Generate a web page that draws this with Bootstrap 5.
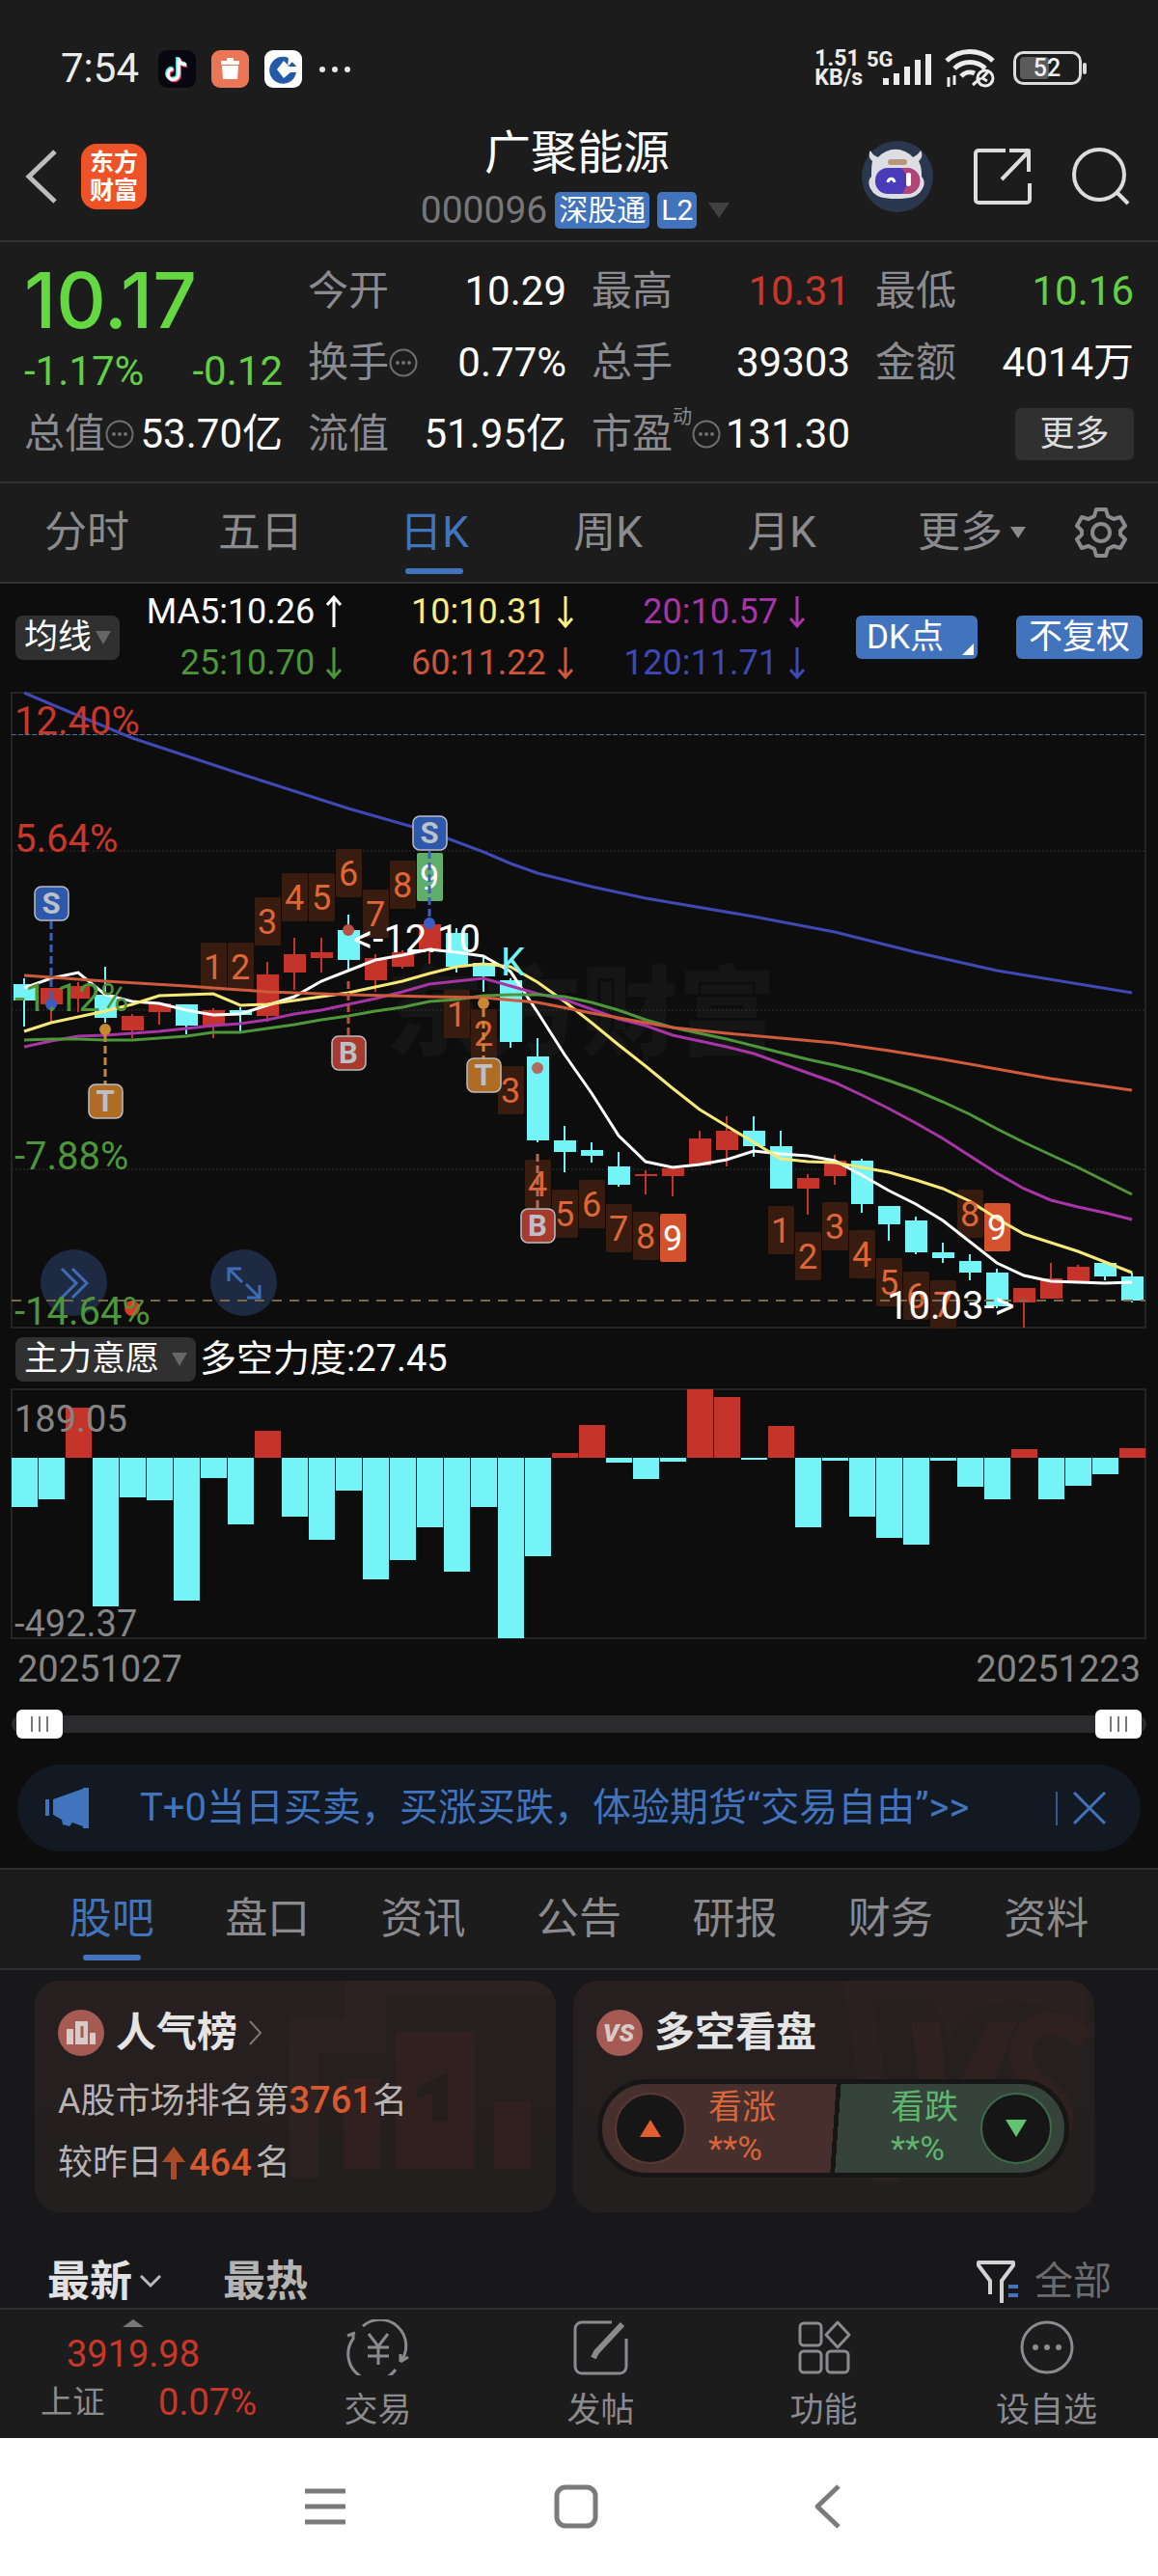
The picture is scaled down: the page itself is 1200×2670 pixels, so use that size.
<!DOCTYPE html>
<html lang="zh-CN">
<head>
<meta charset="utf-8">
<meta name="viewport" content="width=device-width, initial-scale=1">
<title>广聚能源 000096</title>
<link href="https://cdn.jsdelivr.net/npm/bootstrap@5.3.0/dist/css/bootstrap.min.css" rel="stylesheet">
<style>
:root{--up:#c9372b;--down:#62cf46;--mute:#8b8b8f;--blue:#4273bd;--panel:#1c1c1c;--pit:#0d0d0d;--rule:#303032}
body{font-family:Roboto,"Noto Sans CJK SC",sans-serif;font-size:36px;line-height:1.2;background:#fff;color:#fff}
button,select,input{font:inherit;color:inherit}
button{background:none;border:0;padding:0}
a{color:inherit;text-decoration:none}
svg{display:block;flex:none}
.panel{background:var(--panel)}
.pit{background:var(--pit)}
main.pit{padding-bottom:17px}
.rule-b{border-bottom:2px solid var(--rule)}
.rule-t{border-top:2px solid var(--rule)}
.t-mute{color:var(--mute)}.t-up{color:var(--up)}.t-down{color:var(--down)}
.status{height:116px;padding:46px 72px 0 63px;font-size:42px;color:#ececec}
.app-ico{width:39px;height:39px}
.rate{font-size:23px;line-height:20px;font-weight:700}
.topbar{height:135px;padding:0 28px 0 24px}
.side{width:300px;height:68px;margin-top:33px}
.stock-head{padding-top:10px}
.stock-name{font-size:48px;line-height:66px;margin:0;font-weight:400}
.code{font-size:39px;line-height:52px;color:#77777a}
.chip{font-size:30px;line-height:38px;background:var(--blue);border-radius:5px;padding:0 4px}
.logo{width:68px;height:68px;border-radius:16px;background:#ee5327;font-size:25px;line-height:29px;font-weight:700}
.quote{--bs-gutter-x:26px;margin:0;padding:14px 12px 12px}
.cell{height:74px;font-size:42px;white-space:nowrap}
.cell dt{font-weight:400;color:var(--mute)}
.cell dt sup{font-size:20px;top:-18px}
.cell dd{margin:0}
.price{font-family:Inter,Roboto,sans-serif;font-size:80px;line-height:92px;font-weight:500;color:#64d840}
.delta{font-size:42px;line-height:56px}
.more{font-size:36px;line-height:54px;width:123px;border-radius:6px;background:#303030;color:#ddd}
.tabs{height:102px}
.tabs a{font-size:44px;color:var(--mute);position:relative}
.tabs a.on{color:var(--blue)}
.tabs a.on::after{content:"";position:absolute;left:50%;bottom:8px;width:60px;height:6px;border-radius:3px;background:var(--blue);transform:translateX(-50%)}
.forum-tabs{height:106px;padding:0 35px}
.w-tab{width:15%}
.legend-bar{height:111px;padding:0 16px}
.pick{position:relative}
.pick select{appearance:none;border:0;border-radius:8px;background:#303030;height:46px;line-height:46px;padding:0 9px;font-size:35px}
.pick svg{position:absolute;right:9px;top:16px;pointer-events:none}
.ma{display:grid;grid-template-columns:231fr 239fr 240fr;font-size:36px;line-height:53px}
.ma span{display:flex;justify-content:flex-end;align-items:center;gap:11px}
.tag-btn{background:var(--blue);border-radius:6px;height:45px;line-height:45px;font-size:35px;padding:0 13px}
.tag-dk{width:126px;margin:0 40px 0 52px;padding:0 11px}
.chart{position:relative}
.chart svg.plot{width:100%;height:auto;position:relative;pointer-events:none}
.float-btn{position:absolute;top:87.5%;width:69px;height:69px;border-radius:50%;background:#1d2a42;display:flex;align-items:center;justify-content:center}
.fb-a{left:3.5%}.fb-b{left:18.2%}
.dates{height:64px;padding:0 18px;font-size:38px;color:#858585}
.zoomer{position:relative;height:48px;margin:0 12px}
.zoomer::before{content:"";position:absolute;left:0;right:0;top:15px;height:18px;border-radius:9px;background:#2b2b2d}
.zoomer input{position:absolute;left:5px;right:5px;width:calc(100% - 10px);height:48px;margin:0;appearance:none;background:none;pointer-events:none}
.zoomer input::-webkit-slider-thumb{appearance:none;pointer-events:auto;width:48px;height:30px;border-radius:6px;background:linear-gradient(90deg,#777 2px,#fff 2px 8px,#777 8px 10px,#fff 10px 16px,#777 16px 18px) 15px 7px/18px 16px no-repeat #fff}
.promo{margin:18px 18px 0;height:90px;border-radius:45px;background:#121922;color:#4273bd;font-size:40px;padding:0 36px 0 29px}
.promo i{width:2px;height:35px;background:#35598c}
.feed{background:#18181a}
.tile{position:relative;overflow:hidden;flex:1;height:240px;border-radius:26px;background:linear-gradient(#281f20,#221f1e);padding:24px}
.tile>svg.ghost{position:absolute;right:0;top:0}
.tile h2{font-size:42px;line-height:60px;gap:12px;margin:0;font-weight:700;color:#e4e4e4}
.tile p{font-size:36px;line-height:64px;margin:0;color:#b9b4b3}
.tile h2,.tile p{position:relative}
.tile b{color:#d9592f;font-weight:500;font-size:38px}
.vote{position:relative;height:102px;border-radius:51px;border:5px solid #171616;overflow:hidden;margin:18px 2px 0 1px;background:linear-gradient(94deg,#472f2e 50%,#171616 50% 51%,#35433a 51%)}
.vote button{width:50%;padding:0 13px;gap:23px;font-size:35px;line-height:43px;text-align:left}
.disc{width:74px;height:74px;border-radius:50%;background:#171616;border:2px solid #5a3833;display:flex;align-items:center;justify-content:center}
.sort{height:99px;padding:45px 48px 0 49px;font-size:44px;line-height:56px}
.sort a{font-weight:700}
.sort button{font-size:40px;color:#6c6c6e}
.bottom{height:135px}
.bottom a{flex:1;font-size:35px;color:var(--mute);padding-top:10px}
.bottom .index{flex:0 0 23%;color:var(--up)}
.index-val{font-size:38px;line-height:56px}
.index-row{font-size:38px;line-height:44px;padding:0 10px 0 42px}
.sysnav{height:143px;background:#fff;padding-right:6px}
.sysnav button{width:260px;height:142px;display:flex;align-items:center;justify-content:center}
</style>
</head>
<body>
<div class="panel">
  <div class="status d-flex align-items-start justify-content-between">
    <div class="d-flex align-items-center gap-3">
      <span class="me-1">7:54</span>
      <svg class="app-ico" viewBox="0 0 39 39"><rect width="39" height="39" rx="9" fill="#070710"/><g fill="none" stroke-width="4"><path d="M21 8v17a5.500 5.500 0 1 1-5.500-5.500M21 9c1 4 4 6 8 6" stroke="#35e5e0" transform="translate(-1 -1)"/><path d="M21 8v17a5.500 5.500 0 1 1-5.500-5.500M21 9c1 4 4 6 8 6" stroke="#f0325a" transform="translate(1 1)"/><path d="M21 8v17a5.500 5.500 0 1 1-5.500-5.500M21 9c1 4 4 6 8 6" stroke="#fff" stroke-width="3.500"/></g></svg>
      <svg class="app-ico" viewBox="0 0 39 39"><rect width="39" height="39" rx="9" fill="#ea7657"/><path d="M16 8h7v3h6v4H10v-4h6zM11 16h17l-1 14H12z" fill="#fff"/></svg>
      <svg class="app-ico" viewBox="0 0 39 39"><rect width="39" height="39" rx="9" fill="#fff"/><path d="M25 8A14 14 0 1 0 33 23h-6l-7 6-7-9 7-9 6 6h7A14 14 0 0 0 30 11l-6 6z" fill="#2459a8"/><path d="M23 5l11 11" stroke="#fff" stroke-width="2"/></svg>
      <svg width="36" height="39" viewBox="0 0 36 39" fill="#e8e8e8"><circle cx="5" cy="20" r="3"/><circle cx="18" cy="20" r="3"/><circle cx="31" cy="20" r="3"/></svg>
    </div>
    <div class="d-flex align-items-center pt-1">
      <span class="rate">1.51<br>KB/s</span>
      <svg width="72" height="40" viewBox="0 0 72 40" fill="#ececec" class="ms-1"><text x="0" y="18" font-size="22" font-weight="700">5G</text><path d="M17 30h6v7h-6zM28 25h6v12h-6zM39 18h6v19h-6zM50 11h6v26h-6zM61 5h6v32h-6z"/></svg>
      <svg width="56" height="42" viewBox="0 0 56 42" fill="none" stroke="#ececec" stroke-width="5" class="ms-2"><path d="M3 13a35 35 0 0 1 48 0M11 21a23 23 0 0 1 32 0M18 29a12 12 0 0 1 14-3"/><circle cx="43" cy="31" r="8" stroke-width="3"/><path d="M46 24l-6 7 5 3M30 38l8-7" stroke-width="3"/><path d="M5 30v10M11 28v10" stroke-width="3"/></svg>
      <svg width="78" height="36" viewBox="0 0 78 36" class="ms-3"><rect x="1.500" y="1.500" width="68" height="32" rx="9" fill="none" stroke="#dcdcdc" stroke-width="3"/><rect x="7" y="6" width="30" height="23" rx="4" fill="#5b5b5b"/><rect x="72" y="12" width="4" height="12" rx="2" fill="#dcdcdc"/><text x="35" y="26" font-size="25" font-weight="500" fill="#f0f0f0" text-anchor="middle">52</text></svg>
    </div>
  </div>

  <header class="topbar d-flex align-items-start justify-content-between rule-b">
    <div class="side d-flex align-items-center gap-4">
      <button aria-label="返回"><svg width="36" height="60" viewBox="0 0 36 60" fill="none" stroke="#bdbdbd" stroke-width="5"><path d="M33 4L6 30l27 26"/></svg></button>
      <a href="#" class="logo d-flex align-items-center justify-content-center text-center">东方<br>财富</a>
    </div>
    <div class="text-center stock-head">
      <h1 class="stock-name">广聚能源</h1>
      <div class="d-flex align-items-center justify-content-center gap-2 code"><span>000096</span><span class="chip text-white">深股通</span><span class="chip text-white">L2</span><svg width="30" height="16" viewBox="0 0 30 16"><path d="M4 0h22L15 16z" fill="#414141"/></svg></div>
    </div>
    <div class="side d-flex align-items-center justify-content-end gap-4">
      <a href="#" aria-label="助手"><svg width="76" height="76" viewBox="0 0 76 76"><circle cx="38" cy="38" r="37" fill="#2b374e"/><path d="M12 22c-4-3-4-8-2-11 2 4 5 6 8 7a24 24 0 0 1 36 0c4-2 6-4 8-7 2 3 2 8-2 11 4 8 3 16 3 16 4 4 3 10 0 14-4 7-12 9-26 9s-22-2-26-9c-3-4-4-10 0-14 0-6 0-11 1-16z" fill="#dddde4"/><rect x="15" y="29" width="46" height="27" rx="13" fill="#4a3bb8"/><path d="M42 29h6a13 13 0 0 1 0 27h-6c8-8 8-19 0-27z" fill="#b04678"/><rect x="28" y="20" width="20" height="6" rx="3" fill="#b6977c"/><path d="M28 44c1-5 6-5 7 0" fill="none" stroke="#fff" stroke-width="3"/><rect x="47" y="34" width="5" height="14" rx="2" fill="#fff"/></svg></a>
      <a href="#" aria-label="分享" class="ms-3"><svg width="62" height="62" viewBox="0 0 62 62" fill="none" stroke="#dcdcdc" stroke-width="4" stroke-linejoin="round"><path d="M34 4H6a3 3 0 0 0-3 3v48a3 3 0 0 0 3 3h50a3 3 0 0 0 3-3V38M38 4h20v22M58 5L30 34"/></svg></a>
      <a href="#" aria-label="搜索" class="ms-3"><svg width="62" height="62" viewBox="0 0 62 62" fill="none" stroke="#dcdcdc" stroke-width="4"><circle cx="29" cy="29" r="26"/><path d="M48 48l11 11"/></svg></a>
    </div>
  </header>

  <dl class="row quote rule-b">
    <div class="col-3">
      <div class="price">10.17</div>
      <div class="delta d-flex justify-content-between t-down"><span>-1.17%</span><span>-0.12</span></div>
      <div class="cell d-flex align-items-center justify-content-between"><dt class="d-flex align-items-center">总值<svg width="30" height="30" viewBox="0 0 30 30"><use href="#dots"/></svg></dt><dd>53.70亿</dd></div>
    </div>
    <div class="col-3">
      <div class="cell d-flex align-items-center justify-content-between"><dt>今开</dt><dd>10.29</dd></div>
      <div class="cell d-flex align-items-center justify-content-between"><dt class="d-flex align-items-center">换手<svg width="30" height="30" viewBox="0 0 30 30"><use href="#dots"/></svg></dt><dd>0.77%</dd></div>
      <div class="cell d-flex align-items-center justify-content-between"><dt>流值</dt><dd>51.95亿</dd></div>
    </div>
    <div class="col-3">
      <div class="cell d-flex align-items-center justify-content-between"><dt>最高</dt><dd class="t-up">10.31</dd></div>
      <div class="cell d-flex align-items-center justify-content-between"><dt>总手</dt><dd>39303</dd></div>
      <div class="cell d-flex align-items-center justify-content-between"><dt class="d-flex align-items-center">市盈<sup>动</sup><svg width="30" height="30" viewBox="0 0 30 30"><use href="#dots"/></svg></dt><dd>131.30</dd></div>
    </div>
    <div class="col-3">
      <div class="cell d-flex align-items-center justify-content-between"><dt>最低</dt><dd class="t-down">10.16</dd></div>
      <div class="cell d-flex align-items-center justify-content-between"><dt>金额</dt><dd>4014万</dd></div>
      <div class="cell d-flex align-items-center justify-content-end"><button class="more">更多</button></div>
    </div>
  </dl>

  <nav class="tabs d-flex">
    <a href="#" class="w-tab d-flex align-items-center justify-content-center">分时</a>
    <a href="#" class="w-tab d-flex align-items-center justify-content-center">五日</a>
    <a href="#" class="w-tab d-flex align-items-center justify-content-center on">日K</a>
    <a href="#" class="w-tab d-flex align-items-center justify-content-center">周K</a>
    <a href="#" class="w-tab d-flex align-items-center justify-content-center">月K</a>
    <a href="#" class="flex-fill d-flex align-items-center justify-content-center gap-2">更多<svg width="16" height="12" viewBox="0 0 16 12"><path d="M0 0h16L8 12z" fill="#8b8b8f"/></svg></a>
    <a href="#" aria-label="设置" class="d-flex align-items-center pe-4 me-2"><svg width="54" height="54" viewBox="0 0 54 54" fill="none" stroke="#8b8b8f" stroke-width="4" stroke-linejoin="round"><path d="M22 3h10l2 7 6 3 7-2 5 9-5 5v4l5 5-5 9-7-2-6 3-2 7H22l-2-7-6-3-7 2-5-9 5-5v-4l-5-5 5-9 7 2 6-3z"/><circle cx="27" cy="27" r="9"/></svg></a>
  </nav>
</div>

<main class="pit rule-t">
  <div class="legend-bar d-flex align-items-center">
    <label class="pick"><select aria-label="指标" style="width:108px"><option>均线</option></select><svg width="16" height="14" viewBox="0 0 16 14"><path d="M0 0h16L8 14z" fill="#666"/></svg></label>
    <div class="ma flex-fill" id="ma"></div>
    <button class="tag-btn tag-dk text-start position-relative">DK点<svg class="position-absolute end-0 bottom-0 me-1 mb-1" width="12" height="12" viewBox="0 0 12 12"><path d="M12 0v12H0z" fill="#fff"/></svg></button>
    <button class="tag-btn">不复权</button>
  </div>

  <div class="chart">
    <button class="float-btn fb-a" aria-label="展开"><svg width="34" height="34" viewBox="0 0 34 34" fill="none" stroke="#3f6db5" stroke-width="3"><path d="M4 2l15 15L4 32M15 2l15 15-15 15"/></svg></button>
    <button class="float-btn fb-b" aria-label="全屏"><svg width="38" height="38" viewBox="0 0 38 38" fill="none" stroke="#3f6db5" stroke-width="3"><path d="M3 17V4h13M4 5l13 13M35 21v13H22M34 33L21 20"/></svg></button>
    <svg class="plot" id="kline" viewBox="0 716 1200 662" role="img" aria-label="日K线图"></svg>
  </div>

  <div class="d-flex align-items-center px-3" style="height:61px">
    <label class="pick"><select aria-label="副图指标" style="width:187px"><option>主力意愿</option></select><svg width="16" height="14" viewBox="0 0 16 14"><path d="M0 0h16L8 14z" fill="#666"/></svg></label>
    <span class="ms-1" style="font-size:38px">多空力度:27.45</span>
  </div>
  <div class="chart"><svg class="plot" id="force" viewBox="0 1439 1200 260" role="img" aria-label="多空力度"></svg></div>
  <div class="dates d-flex align-items-center justify-content-between"><span>20251027</span><span>20251223</span></div>
  <div class="zoomer"><input type="range" value="0" aria-label="起始"><input type="range" value="100" aria-label="结束"></div>

  <div class="promo d-flex align-items-center">
    <svg width="50" height="42" viewBox="0 0 50 42" fill="#4273bd"><path d="M0 12h4v17H0zM8 12L39 1V0h6v42h-6v-2l-11-4-3 4-7-2-1-5-9-5z"/></svg>
    <a href="#" class="flex-fill ps-5">T+0当日买卖，买涨买跌，体验期货“交易自由”&gt;&gt;</a>
    <i></i>
    <button aria-label="关闭" class="ps-3"><svg width="34" height="34" viewBox="0 0 34 34" stroke="#4273bd" stroke-width="3"><path d="M1 1l32 32M33 1L1 33"/></svg></button>
  </div>
</main>

<section class="feed">
  <nav class="tabs forum-tabs panel rule-t rule-b d-flex">
    <a href="#" class="col d-flex align-items-center justify-content-center on">股吧</a>
    <a href="#" class="col d-flex align-items-center justify-content-center">盘口</a>
    <a href="#" class="col d-flex align-items-center justify-content-center">资讯</a>
    <a href="#" class="col d-flex align-items-center justify-content-center">公告</a>
    <a href="#" class="col d-flex align-items-center justify-content-center">研报</a>
    <a href="#" class="col d-flex align-items-center justify-content-center">财务</a>
    <a href="#" class="col d-flex align-items-center justify-content-center">资料</a>
  </nav>
  <div class="d-flex" style="gap:18px;padding:11px 66px 0 36px">
    <article class="tile">
      <svg class="ghost" width="280" height="240" viewBox="0 0 280 240"><path d="M62 0h218v14H104v60H34v130H4V40h58z" fill="#2b2221"/><path d="M114 53h82v142h-82zM60 101h38v94H60zM216 125h38v70h-38z" fill="#302120"/><path d="M136 110l32-14v50h-16v-30l-16 6z" fill="#251e1e"/></svg>
      <h2 class="d-flex align-items-center"><svg width="48" height="48" viewBox="0 0 48 48"><circle cx="24" cy="24" r="24" fill="#a55a54"/><path d="M9 20h7v16H9zM18 12h13v24H18zM33 24h6v12h-6z" fill="#d9c9c7"/><path d="M25 17v12" stroke="#a55a54" stroke-width="3"/></svg><span>人气榜</span><svg width="14" height="26" viewBox="0 0 14 26" fill="none" stroke="#777" stroke-width="2"><path d="M1 1l11 12L1 25"/></svg></h2>
      <p class="mt-2">A股市场排名第<b>3761</b>名</p>
      <p class="d-flex align-items-center">较昨日<svg width="24" height="34" viewBox="0 0 24 34"><path d="M12 0l12 16h-9v18H9V16H0z" fill="#a84a26"/></svg><b class="mx-1">464</b>名</p>
    </article>
    <article class="tile">
      <svg class="ghost" width="270" height="240" viewBox="0 0 270 240"><path d="M10 0h250v50c-40-40-120-40-140 10l-20-42H40l30 190H40z" fill="#2a2120"/><path d="M80 42h30l8 90 42-90h30L130 195h-30z" fill="#2f2120"/><path d="M260 60c-30-30-70-15-65 20s50 35 40 70-40 25-55 10" fill="none" stroke="#2f2120" stroke-width="24"/></svg>
      <h2 class="d-flex align-items-center"><svg width="48" height="48" viewBox="0 0 48 48"><circle cx="24" cy="24" r="24" fill="#a55a54"/><text x="23" y="33" font-size="26" font-weight="900" font-style="italic" fill="#d9c9c7" text-anchor="middle">VS</text></svg><span>多空看盘</span></h2>
      <div class="vote d-flex">
        <button class="d-flex align-items-center" style="color:#d9653a"><span class="disc"><svg width="22" height="18" viewBox="0 0 22 18"><path d="M11 0l11 18H0z" fill="#e2602f"/></svg></span><span>看涨<br>**%</span></button>
        <button class="d-flex align-items-center justify-content-end" style="color:#5fb56c"><span>看跌<br>**%</span><span class="disc" style="border-color:#3d6a49"><svg width="22" height="18" viewBox="0 0 22 18"><path d="M0 0h22L11 18z" fill="#62c270"/></svg></span></button>
      </div>
    </article>
  </div>
  <div class="sort d-flex align-items-center">
    <a href="#" class="d-flex align-items-center gap-2" style="color:#e2e2e2">最新<svg width="22" height="14" viewBox="0 0 22 14" fill="none" stroke="#bbb" stroke-width="3"><path d="M1 1l10 10L21 1"/></svg></a>
    <a href="#" class="ms-5 ps-3" style="color:#b4b4b4">最热</a>
    <button class="ms-auto d-flex align-items-center gap-3"><svg width="44" height="46" viewBox="0 0 44 46" fill="none" stroke="#d2d2d2" stroke-width="4" stroke-linejoin="round"><path d="M14 36V22L2 6V3h36v3L26 22v23"/><path d="M33 28h10M33 37h10" stroke="#4273bd"/></svg>全部</button>
  </div>
</section>

<nav class="bottom panel rule-t d-flex">
  <a href="#" class="index d-flex flex-column align-items-center"><svg width="22" height="8" viewBox="0 0 22 8"><path d="M11 0l11 8H0z" fill="#77777a"/></svg><span class="index-val">3919.98</span><span class="index-row d-flex align-items-center justify-content-between w-100"><small class="t-mute">上证</small><span>0.07%</span></span></a>
  <a href="#" class="d-flex flex-column align-items-center gap-3"><svg width="66" height="58" viewBox="0 0 66 58" fill="none" stroke="#8b8b8f" stroke-width="3"><path d="M17 7a27 27 0 0 1 39 37M1 17l8-3M7 14v6a27 27 0 0 0 44 32M56 44l8-5M56 44v-8M23 15l10 13 10-13M22 29h22M22 38h22M33 28v19"/></svg>交易</a>
  <a href="#" class="d-flex flex-column align-items-center gap-3"><svg width="58" height="58" viewBox="0 0 58 58" fill="none" stroke="#8b8b8f" stroke-width="3"><path d="M40 3H9a7 7 0 0 0-7 7v39a7 7 0 0 0 7 7h39a7 7 0 0 0 7-7V20"/><path d="M51 5L24 34l-3 6" stroke-width="6"/></svg>发帖</a>
  <a href="#" class="d-flex flex-column align-items-center gap-3"><svg width="56" height="58" viewBox="0 0 56 58" fill="none" stroke="#8b8b8f" stroke-width="3"><rect x="3" y="4" width="22" height="23" rx="4"/><rect x="3" y="33" width="22" height="22" rx="4"/><rect x="31" y="33" width="22" height="22" rx="4"/><path d="M42 3l12 13-12 13-12-13z" stroke-linejoin="round"/></svg>功能</a>
  <a href="#" class="d-flex flex-column align-items-center gap-3"><svg width="58" height="58" viewBox="0 0 58 58" fill="none" stroke="#8b8b8f" stroke-width="3"><circle cx="29" cy="29" r="26"/><g fill="#8b8b8f" stroke="none"><circle cx="17" cy="29" r="3"/><circle cx="29" cy="29" r="3"/><circle cx="41" cy="29" r="3"/></g></svg>设自选</a>
</nav>
<div class="sysnav d-flex justify-content-center">
  <button aria-label="任务"><svg width="42" height="44" viewBox="0 0 42 44" stroke="#7b7b7b" stroke-width="5"><path d="M0 6h42M0 22h42M0 38h42"/></svg></button>
  <button aria-label="主页"><svg width="46" height="46" viewBox="0 0 46 46" fill="none" stroke="#7b7b7b" stroke-width="5"><rect x="3" y="3" width="40" height="40" rx="9"/></svg></button>
  <button aria-label="返回"><svg width="28" height="46" viewBox="0 0 28 46" fill="none" stroke="#7b7b7b" stroke-width="5" stroke-linejoin="round"><path d="M26 2L4 23l22 21"/></svg></button>
</div>

<svg width="0" height="0" class="position-absolute"><defs><g id="dots"><circle cx="15" cy="15" r="13.500" fill="none" stroke="#6f6f72" stroke-width="2"/><g fill="#6f6f72"><circle cx="9" cy="15" r="2"/><circle cx="15" cy="15" r="2"/><circle cx="21" cy="15" r="2"/></g></g></defs></svg>

<script src="https://cdn.jsdelivr.net/npm/bootstrap@5.3.0/dist/js/bootstrap.bundle.min.js"></script>
<script>
const CY='#74f4f6', RD='#c4342b';
const cx=i=>25+28*i;

// moving-average legend: label, colour, direction
document.getElementById('ma').innerHTML=[['MA5:10.26','#fff',1],['10:10.31','#f7ef82',0],['20:10.57','#a834a8',0],['25:10.70','#4d9639',0],['60:11.22','#cf5639',0],['120:11.71','#3f49b5',0]]
 .map(([t,c,u])=>`<span style="color:${c}">${t}<svg width="18" height="34" viewBox="0 0 18 34" fill="none" stroke="${c}" stroke-width="3"><path d="${u?'M9 33V2M2 10l7-8 7 8':'M9 1v31M2 24l7 8 7-8'}"/></svg></span>`).join('');

// candles: rising flag, high, body top, body bottom, low
const K=[[0,1014,1020,1037,1064],[1,1024,1024,1041,1059],[1,1018,1022,1035,1049],[0,1002,1031,1055,1060],[1,1051,1053,1068,1076],[1,1040,1040,1049,1062],[0,1041,1041,1063,1072],[1,1045,1047,1063,1076],[0,1044,1047,1052,1070],[1,997,1010,1053,1059],[1,972,989,1008,1026],[1,972,987,993,1008],[0,948,964,995,1006],[1,989,993,1016,1028],[1,985,987,1002,1004],[1,955,958,985,999],[0,962,967,1002,1008],[0,991,998,1012,1028],[0,1014,1016,1080,1086],[0,1076,1095,1182,1184],[0,1167,1182,1194,1215],[0,1184,1192,1198,1205],[0,1194,1209,1228,1230],[1,1213,1217,1219,1238],[1,1211,1211,1219,1240],[1,1172,1180,1208,1208],[1,1157,1172,1192,1209],[0,1157,1172,1188,1199],[0,1172,1188,1232,1232],[1,1217,1221,1232,1259],[1,1197,1203,1219,1228],[0,1201,1203,1248,1257],[0,1250,1250,1269,1286],[0,1261,1265,1298,1300],[0,1288,1298,1304,1309],[0,1300,1307,1319,1327],[0,1315,1319,1354,1356],[1,1335,1335,1350,1376],[1,1309,1325,1346,1346],[1,1311,1313,1328,1328],[0,1309,1309,1323,1327],[0,1319,1323,1348,1350]];
const L={
 '#3f49b5':[[0,718],[1,730],[4,765],[8,802],[12,838],[15,862],[17,883],[18,895],[19,905],[21,919],[23,931],[27,950],[30,966],[33,987],[36,1006],[41,1029]],
 '#fff':[1024,1014,1008,1031,1038,1040,1047,1052,1051,1042,1033,1017,1006,995,990,984,987,991,1007,1049,1093,1133,1177,1204,1210,1207,1202,1193,1196,1198,1203,1218,1234,1248,1265,1287,1309,1322,1328,1329,1330,1329],
 '#f7e978':[1069,1060,1054,1048,1041,1032,1031,1030,1042,1041,1037,1033,1029,1023,1017,1009,1002,999,1002,1018,1038,1060,1083,1105,1128,1150,1167,1184,1201,1204,1205,1210,1215,1223,1232,1245,1263,1279,1288,1297,1308,1319],
 '#a834a8':[1085,1079,1074,1073,1071,1069,1066,1063,1061,1057,1051,1047,1041,1035,1028,1020,1017,1014,1022,1030,1036,1046,1056,1063,1073,1079,1085,1092,1102,1112,1122,1135,1149,1164,1180,1198,1216,1232,1244,1251,1257,1264],
 '#4d9639':[1078,1077,1077,1078,1078,1076,1074,1070,1070,1066,1062,1057,1053,1048,1044,1038,1036,1032,1031,1031,1033,1039,1047,1057,1065,1071,1077,1084,1091,1098,1104,1111,1120,1130,1142,1155,1170,1184,1197,1210,1224,1238],
 '#cf5a3c':[[0,1011],[3,1017],[6,1022],[9,1028],[12,1031],[15,1033],[17,1034],[19,1039],[21,1050],[22,1055],[24,1065],[26,1071],[28,1076],[30,1081],[32,1089],[34,1098],[36,1108],[38,1118],[41,1130]]
};
// setup counts: index, box top, digit, optional solid fill
const N=[[7,977,1],[8,977,2],[9,930,3],[10,905,4],[11,905,5],[12,880,6],[13,922,7],[14,892,8],[15,884,9,'#5fae6b'],[16,1026,1],[17,1046,2],[18,1105,3],[19,1202,4],[20,1233,5],[21,1223,6],[22,1248,7],[23,1256,8],[24,1258,9,'#d4522d'],[28,1250,1],[29,1277,2],[30,1246,3],[31,1275,4],[32,1304,5],[33,1318,6],[34,1327,7],[35,1233,8],[36,1247,9,'#d4522d']];
// signals: index, badge top, letter, colour, dot colour, dot y, dash start, dash end
const S=[[1,919,'S','#2d58ac','#3d5dc4',1041,955,1036],[15,846,'S','#2d58ac','#3d5dc4',957,882,952],[3,1124,'T','#b06c22','#c98732',1067,1072,1124],[12,1074,'B','#a63a2c','#b85044',964,1017,1074],[17,1097,'T','#b06c22','#c98732',1040,1046,1097],[19,1253,'B','#a63a2c','#b06a5e',1107,1196,1253]];

let h='<rect x="12" y="718" width="1175" height="658" fill="none" stroke="#242424" stroke-width="2"/>';
h+='<text x="400" y="1086" font-size="101" font-weight="900" fill="#151515">东方财富</text>';
h+='<path d="M12 882H1187M12 1047H1187M12 1212H1187" stroke="#333" stroke-dasharray="2 2"/><path d="M12 761.500H1187" stroke="#4d7399" stroke-dasharray="5 2"/>';
N.forEach(([i,y,d,f])=>{h+=`<rect x="${cx(i)-13}" y="${y}" width="27" height="50" rx="2" fill="${f||'#371c0f'}"/>`});
K.forEach(([u,a,b,c,d],i)=>{const f=u?RD:CY;h+=`<path d="M${cx(i)} ${a}V${d}" stroke="${f}" stroke-width="2"/><rect x="${cx(i)-11}" y="${b}" width="23" height="${c-b}" fill="${f}"/>`});
for(const c in L){const p=L[c].map((v,i)=>Array.isArray(v)?cx(v[0])+','+v[1]:cx(i)+','+v).join(' ');h+=`<polyline points="${p}" fill="none" stroke="${c}" stroke-width="3"/>`}
N.forEach(([i,y,d,f])=>{h+=`<text x="${cx(i)}" y="${y+38}" font-size="36" text-anchor="middle" fill="${f?'#fff':'#df6636'}">${d}</text>`});
S.forEach(([i,y,t,f,g,dy,a,b])=>{h+=`<path d="M${cx(i)} ${a}V${b}" stroke="${g}" stroke-width="3" stroke-dasharray="8 4"/><circle cx="${cx(i)}" cy="${dy}" r="6" fill="${g}"/><rect x="${cx(i)-17}" y="${y}" width="35" height="35" rx="7" fill="${f}" stroke="#b9bdc6" stroke-width="1.500"/><text x="${cx(i)}" y="${y+28}" font-size="31" font-weight="700" text-anchor="middle" fill="#bcc0c8">${t}</text>`});
h+='<path d="M12 1348H1187" stroke="#7d6844" stroke-width="2" stroke-dasharray="10 8"/><circle cx="137" cy="1356" r="8" fill="#dc3a22"/>';
[[761,'#c9372b','12.40%'],[883,'#c9372b','5.64%'],[1048,'#4d9639','-1.12%'],[1212,'#4d9639','-7.88%'],[1373,'#4d9639','-14.64%']].forEach(([y,c,t])=>{h+=`<text x="15" y="${y}" font-size="40" fill="${c}">${t}</text>`});
h+=`<text x="366" y="987" font-size="40" fill="#fff">&lt;-12.10</text><text x="919" y="1367" font-size="40" fill="#fff">10.03-&gt;</text><text x="519" y="1011" font-size="40" fill="${CY}">K</text>`;
document.getElementById('kline').innerHTML=h;

// force histogram: bar end per day, measured from the zero line
const Z=1511,F=[1562,1554,1459,1665,1552,1555,1659,1532,1580,1483,1572,1596,1545,1637,1617,1583,1629,1562,1698,1613,1506,1477,1516,1533,1515,1440,1448,1513,1478,1583,1514,1572,1594,1601,1514,1541,1554,1502,1554,1540,1528,1501];
let g='<rect x="12" y="1440" width="1175" height="258" fill="none" stroke="#242424" stroke-width="2"/>';
F.forEach((v,i)=>{g+=`<rect x="${12+28*i}" y="${Math.min(v,Z)}" width="27" height="${Math.abs(v-Z)}" fill="${v<Z?RD:CY}"/>`});
g+='<text x="15" y="1484" font-size="38" fill="#858585">189.05</text><text x="15" y="1696" font-size="38" fill="#858585">-492.37</text>';
document.getElementById('force').innerHTML=g;
</script>
</body>
</html>
